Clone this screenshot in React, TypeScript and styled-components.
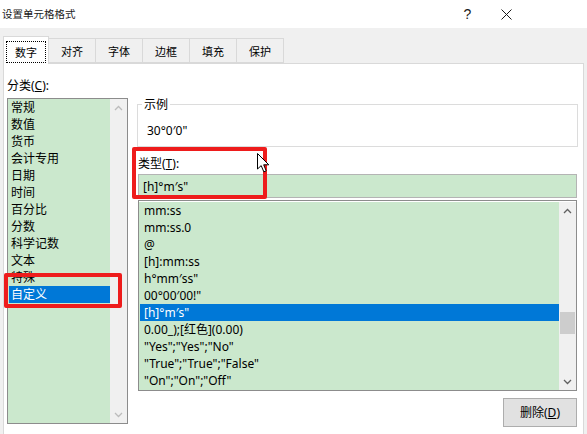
import styled, { createGlobalStyle } from 'styled-components';

const GlobalStyle = createGlobalStyle`
  html, body {
    margin: 0;
    padding: 0;
  }
  body {
    width: 587px;
    height: 434px;
    overflow: hidden;
    background: #f0f0f0;
    font-family: "Noto Sans", "Noto Sans CJK SC", sans-serif;
    color: #000;
  }
`;

const tabs = ['数字', '对齐', '字体', '边框', '填充', '保护'];

const categories = [
  '常规', '数值', '货币', '会计专用', '日期', '时间',
  '百分比', '分数', '科学记数', '文本', '特殊', '自定义',
];

const formats = [
  'mm:ss',
  'mm:ss.0',
  '@',
  '[h]:mm:ss',
  'h°mm′ss"',
  '00°00′00!"',
  '[h]°m′s"',
  '0.00_);[红色](0.00)',
  '"Yes";"Yes";"No"',
  '"True";"True";"False"',
  '"On";"On";"Off"',
];

const Chevron = ({ up, color }: { up?: boolean; color: string }) => (
  <svg width="9" height="6" viewBox="0 0 9 6">
    <path
      d={up ? 'M1 5 L4.5 1.5 L8 5' : 'M1 1 L4.5 4.5 L8 1'}
      fill="none"
      stroke={color}
      strokeWidth="1.3"
    />
  </svg>
);

const App = () => {
  return <Window>
    <GlobalStyle />
    <TitleBar>
      <Title>设置单元格格式</Title>
      <TitleButtons>
        <TitleButton>?</TitleButton>
        <TitleButton>
          <svg width="11" height="11" viewBox="0 0 11 11">
            <path d="M0.5 0.5 L10.5 10.5 M10.5 0.5 L0.5 10.5" stroke="#1a1a1a" strokeWidth="1" />
          </svg>
        </TitleButton>
      </TitleButtons>
    </TitleBar>

    <TabStrip>
      {tabs.map((t, i) => (
        <Tab key={t} active={i === 0}>
          {i === 0 ? <FocusRing>{t}</FocusRing> : t}
        </Tab>
      ))}
    </TabStrip>

    <Panel>
      <LeftColumn>
        <FieldLabel>分类(<U>C</U>):</FieldLabel>
        <CategoryBox>
          <ItemsPane>
            {categories.map((c, i) => (
              <CategoryItem key={c} selected={i === categories.length - 1}>{c}</CategoryItem>
            ))}
          </ItemsPane>
          <ScrollBar>
            <ArrowCell><Chevron up color="#bcbcbc" /></ArrowCell>
            <Track />
            <ArrowCell><Chevron color="#bcbcbc" /></ArrowCell>
          </ScrollBar>
        </CategoryBox>
      </LeftColumn>

      <RightColumn>
        <GroupBox>
          <Legend>示例</Legend>
          <SampleText>30°0′0"</SampleText>
        </GroupBox>
        <TypeLabel>类型(<U>T</U>):</TypeLabel>
        <TypeInput>[h]°m′s"</TypeInput>
        <FormatBox>
          <ItemsPane>
            {formats.map((f, i) => (
              <FormatItem key={f} selected={i === 6}>{f}</FormatItem>
            ))}
          </ItemsPane>
          <ScrollBar>
            <ArrowCell><Chevron up color="#606060" /></ArrowCell>
            <Track>
              <Thumb />
            </Track>
            <ArrowCell><Chevron color="#606060" /></ArrowCell>
          </ScrollBar>
        </FormatBox>
        <DeleteButton>删除(<U>D</U>)</DeleteButton>
      </RightColumn>
    </Panel>

    <Highlight style={{ left: 4, top: 273, width: 118, height: 35 }} />
    <Highlight style={{ left: 132, top: 147, width: 135, height: 52 }} />
    <Cursor>
      <svg width="13" height="20" viewBox="0 0 13 20">
        <path
          d="M0.5 0.5 L0.5 16 L4.2 12.6 L6.8 18.8 L9.2 17.8 L6.7 11.8 L11.8 11.8 Z"
          fill="#fff"
          stroke="#000"
          strokeWidth="1"
          strokeLinejoin="round"
        />
      </svg>
    </Cursor>
  </Window>
}

const Window = styled.div`
  position: relative;
  width: 587px;
  height: 434px;
  display: flex;
  flex-direction: column;
  background: #f0f0f0;
  overflow: hidden;
`

const TitleBar = styled.div`
  height: 28px;
  flex-shrink: 0;
  background: #fff;
  display: flex;
  align-items: center;
  padding-left: 2px;
`

const Title = styled.div`
  font-size: 10.5px;
  line-height: 14px;
  color: #1a1a1a;
`

const TitleButtons = styled.div`
  margin-left: auto;
  display: flex;
  padding-right: 61px;
`

const TitleButton = styled.div`
  width: 39px;
  height: 28px;
  display: flex;
  align-items: center;
  justify-content: center;
  font-family: "Liberation Sans", sans-serif;
  font-size: 14px;
  color: #1a1a1a;
`

const TabStrip = styled.div`
  height: 35px;
  flex-shrink: 0;
  display: flex;
  align-items: flex-end;
  padding-left: 3px;
  position: relative;
  z-index: 1;
`

const Tab = styled.div<{ active?: boolean }>`
  box-sizing: border-box;
  height: ${(p) => (p.active ? '28px' : '25px')};
  margin-bottom: ${(p) => (p.active ? '-1px' : '0')};
  padding: 0 ${(p) => (p.active ? '2px' : '12px')};
  width: ${(p) => (p.active ? '46px' : 'auto')};
  margin-left: -1px;
  display: flex;
  align-items: center;
  justify-content: center;
  font-size: 11px;
  background: ${(p) => (p.active ? '#fff' : '#f0f0f0')};
  border: 1px solid #d9d9d9;
  border-bottom: ${(p) => (p.active ? 'none' : '1px solid #d9d9d9')};

  &:first-child {
    margin-left: 0;
  }
`

const FocusRing = styled.div`
  box-sizing: border-box;
  width: 41px;
  height: 22px;
  margin-top: 2px;
  border: 1px dotted #000;
  display: flex;
  align-items: center;
  justify-content: center;
`

const Panel = styled.div`
  flex: 1;
  margin: 0 3px 0 3px;
  background: #fff;
  border: 1px solid #d9d9d9;
  border-bottom: none;
  display: grid;
  grid-template-columns: 121px 441px;
  column-gap: 9px;
  align-items: start;
  padding: 13px 5px 0 3px;
  font-size: 12px;
  line-height: 17px;
`

const LeftColumn = styled.div`
  display: flex;
  flex-direction: column;
`

const FieldLabel = styled.div`
  height: 17px;
  margin-bottom: 4px;
`

const U = styled.span`
  text-decoration: underline;
`

const ListFrame = styled.div`
  box-sizing: border-box;
  border: 1px solid #8c8c8c;
  display: flex;
`

const CategoryBox = styled(ListFrame)`
  height: 326px;
`

const ItemsPane = styled.div`
  flex: 1;
  background: #cbe8cd;
`

const Item = styled.div<{ selected?: boolean }>`
  height: 17px;
  white-space: nowrap;
  margin-left: 1px;
  background: ${(p) => (p.selected ? '#0078d7' : 'transparent')};
  color: ${(p) => (p.selected ? '#fff' : '#000')};
`

const CategoryItem = styled(Item)`
  padding-left: 2px;
`

const FormatItem = styled(Item)`
  padding-left: 4px;
`

const ScrollBar = styled.div`
  width: 17px;
  background: #f0f0f0;
  display: flex;
  flex-direction: column;
`

const ArrowCell = styled.div`
  height: 17px;
  display: flex;
  align-items: center;
  justify-content: center;
`

const Track = styled.div`
  flex: 1;
`

const Thumb = styled.div`
  margin: 93px 1px 0 1px;
  height: 22px;
  background: #cdcdcd;
`

const RightColumn = styled.div`
  display: flex;
  flex-direction: column;
`

const GroupBox = styled.fieldset`
  box-sizing: border-box;
  width: 441px;
  margin: 19px 0 0 0;
  padding: 0 0 7px 9px;
  border: 1px solid #dcdcdc;
  min-width: 0;
`

const Legend = styled.legend`
  margin-left: -5px;
  padding: 0 2px;
  line-height: 17px;
`

const SampleText = styled.div`
  margin-top: 9px;
  height: 17px;
`

const TypeLabel = styled.div`
  margin-top: 8px;
  height: 17px;
  padding-left: 1px;
`

const TypeInput = styled.div`
  box-sizing: border-box;
  margin: 2px 0 0 1px;
  width: 439px;
  height: 24px;
  border: 1px solid #b4b4b4;
  background: #cbe8cd;
  padding-left: 4px;
  display: flex;
  align-items: center;
`

const FormatBox = styled(ListFrame)`
  margin: 2px 0 0 1px;
  width: 439px;
  height: 191px;
  padding-top: 1px;
`

const DeleteButton = styled.div`
  box-sizing: border-box;
  align-self: flex-end;
  margin: 7px 1px 0 0;
  width: 74px;
  height: 29px;
  background: #e1e1e1;
  border: 1px solid #adadad;
  display: flex;
  align-items: center;
  justify-content: center;
`

const Highlight = styled.div`
  position: absolute;
  box-sizing: border-box;
  border: 4px solid #ee1c1c;
  border-radius: 2px;
  pointer-events: none;
`

const Cursor = styled.div`
  position: absolute;
  left: 257px;
  top: 153px;
  line-height: 0;
`

export default App
